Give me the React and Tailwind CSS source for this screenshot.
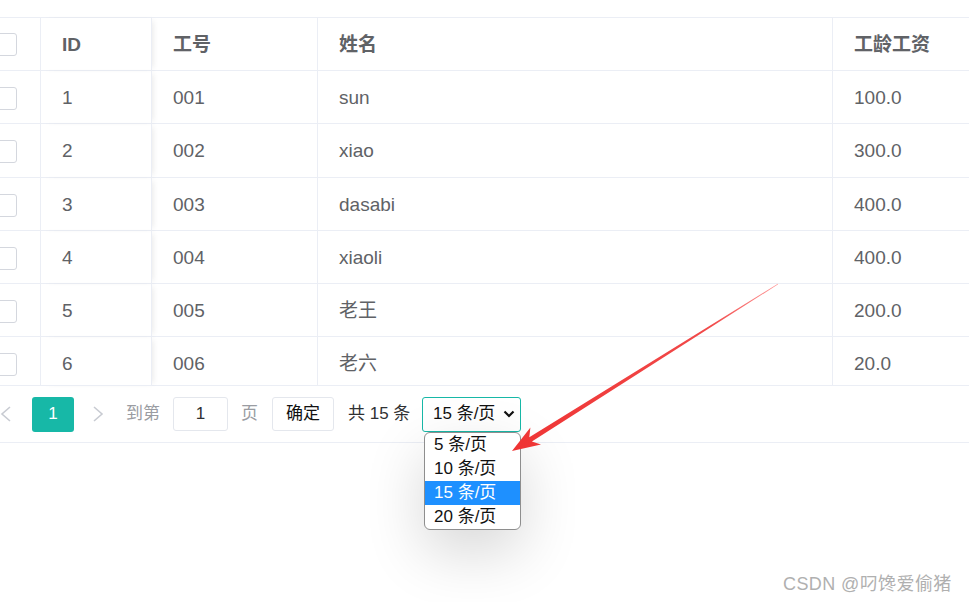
import React from 'react';

const rows = [
  { id: 1, no: '001', name: 'sun', pay: '100.0', h: 'h-[53px] pt-[2px]' },
  { id: 2, no: '002', name: 'xiao', pay: '300.0', h: 'h-[54px] pt-[2px]' },
  { id: 3, no: '003', name: 'dasabi', pay: '400.0', h: 'h-[53px] pt-[2px]' },
  { id: 4, no: '004', name: 'xiaoli', pay: '400.0', h: 'h-[53px] pt-[2px]' },
  { id: 5, no: '005', name: '老王', pay: '200.0', h: 'h-[53px] pt-[2px]' },
  { id: 6, no: '006', name: '老六', pay: '20.0', h: 'h-[49px] pt-[6px]' },
];

const cell = 'flex items-center border-b border-r border-[#ebeef5] pl-[21px]';

function Checkbox() {
  return <span className="block w-[23px] h-[23px] rounded-[3px] border border-[#d4d7de] bg-white" />;
}

function Row({ r }) {
  const h = r.h;
  return (
    <>
      <div className={`${h} flex items-center justify-center border-b border-r border-[#ebeef5]`}>
        <Checkbox />
      </div>
      <div className={`${h} ${cell} relative z-10 shadow-[4px_0_6px_-3px_rgba(0,0,0,0.09)]`}>{r.id}</div>
      <div className={`${h} ${cell}`}>{r.no}</div>
      <div className={`${h} ${cell}`}>{r.name}</div>
      <div className={`${h} ${cell}`}>{r.pay}</div>
    </>
  );
}

function Chevron({ dir }) {
  return (
    <svg width="12" height="18" viewBox="0 0 12 18" className="shrink-0">
      <polyline
        points={dir === 'left' ? '10,2 2,9 10,16' : '2,2 10,9 2,16'}
        fill="none"
        stroke="#c8cbd2"
        strokeWidth="1.6"
      />
    </svg>
  );
}

export default function App() {
  return (
    <div className="relative w-[969px] h-[602px] overflow-hidden bg-white font-['Liberation_Sans','Noto_Sans_CJK_SC',sans-serif]">
      {/* 表格 */}
      <div className="pt-[17px] ml-[-29px]">
        <div className="grid grid-cols-[70px_111px_166px_515px_200px] border-t border-[#ebeef5] text-[19px] text-[#606266]">
          <div className="h-[53px] flex items-center justify-center border-b border-r border-[#ebeef5]">
            <Checkbox />
          </div>
          <div className={`h-[53px] pt-[2px] ${cell} font-bold relative z-10 shadow-[4px_0_6px_-3px_rgba(0,0,0,0.09)]`}>ID</div>
          <div className={`h-[53px] pt-[2px] ${cell} font-bold`}>工号</div>
          <div className={`h-[53px] pt-[2px] ${cell} font-bold`}>姓名</div>
          <div className={`h-[53px] pt-[2px] ${cell} font-bold`}>工龄工资</div>
          {rows.map((r) => (
            <Row key={r.id} r={r} />
          ))}
        </div>
      </div>

      {/* 分页 */}
      <div className="h-[57px] flex items-center border-b border-[#ebeef5] text-[17px]">
        <Chevron dir="left" />
        <div className="ml-[20px] w-[42px] h-[35px] rounded-[3px] bg-[#17b8a7] text-white flex items-center justify-center">1</div>
        <span className="ml-[18px]"><Chevron dir="right" /></span>
        <span className="ml-[22px] w-[47px] text-[#9a9ca2]">到第</span>
        <div className="w-[55px] h-[34px] rounded-[3px] border border-[#e4e7ed] flex items-center justify-center text-[#303133]">1</div>
        <span className="w-[44px] pl-[13px] text-[#9a9ca2]">页</span>
        <div className="w-[62px] h-[34px] rounded-[3px] border border-[#e4e7ed] flex items-center justify-center text-[#111]">确定</div>
        <span className="w-[88px] pl-[14px] text-[#303133]">共 15 条</span>
        <div className="w-[99px] h-[35px] rounded-[3px] border border-[#17b8a7] flex items-center pl-[10px] pr-[5px] text-[#111]">
          <span className="flex-1">15 条/页</span>
          <svg width="12" height="8" viewBox="0 0 12 8">
            <polyline points="1.5,1.5 6,6 10.5,1.5" fill="none" stroke="#111" strokeWidth="2.2" />
          </svg>
        </div>
      </div>

      {/* 下拉选项 */}
      <div className="absolute left-[424px] top-[432px] w-[97px] rounded-[6px] border border-[#8e8e8e] bg-white overflow-hidden text-[17px] text-[#111] shadow-[0_22px_60px_rgba(0,0,0,0.16)]">
        <div className="h-[24px] flex items-center pl-[9px]">5 条/页</div>
        <div className="h-[24px] flex items-center pl-[9px]">10 条/页</div>
        <div className="h-[24px] flex items-center pl-[9px] bg-[#1e90ff] text-white">15 条/页</div>
        <div className="h-[24px] flex items-center pl-[9px]">20 条/页</div>
      </div>

      {/* 红色箭头 */}
      <svg className="absolute left-0 top-0 pointer-events-none" width="969" height="602">
        <defs>
          <linearGradient id="arw" x1="778" y1="284" x2="512" y2="451" gradientUnits="userSpaceOnUse">
            <stop offset="0" stopColor="#ff9a9a" />
            <stop offset="0.25" stopColor="#f14a4a" />
            <stop offset="1" stopColor="#ef3434" />
          </linearGradient>
        </defs>
        <polygon
          points="512,451 541,444.6 531.9,441.4 778.2,284.3 777.8,283.7 529.3,437.2 530.4,427.6"
          fill="url(#arw)"
        />
      </svg>

      {/* 水印 */}
      <div className="absolute left-[783px] top-[571px] text-[18px] tracking-[0.4px] text-[#b0b0b0]">CSDN @叼馋爱偷猪</div>
    </div>
  );
}
